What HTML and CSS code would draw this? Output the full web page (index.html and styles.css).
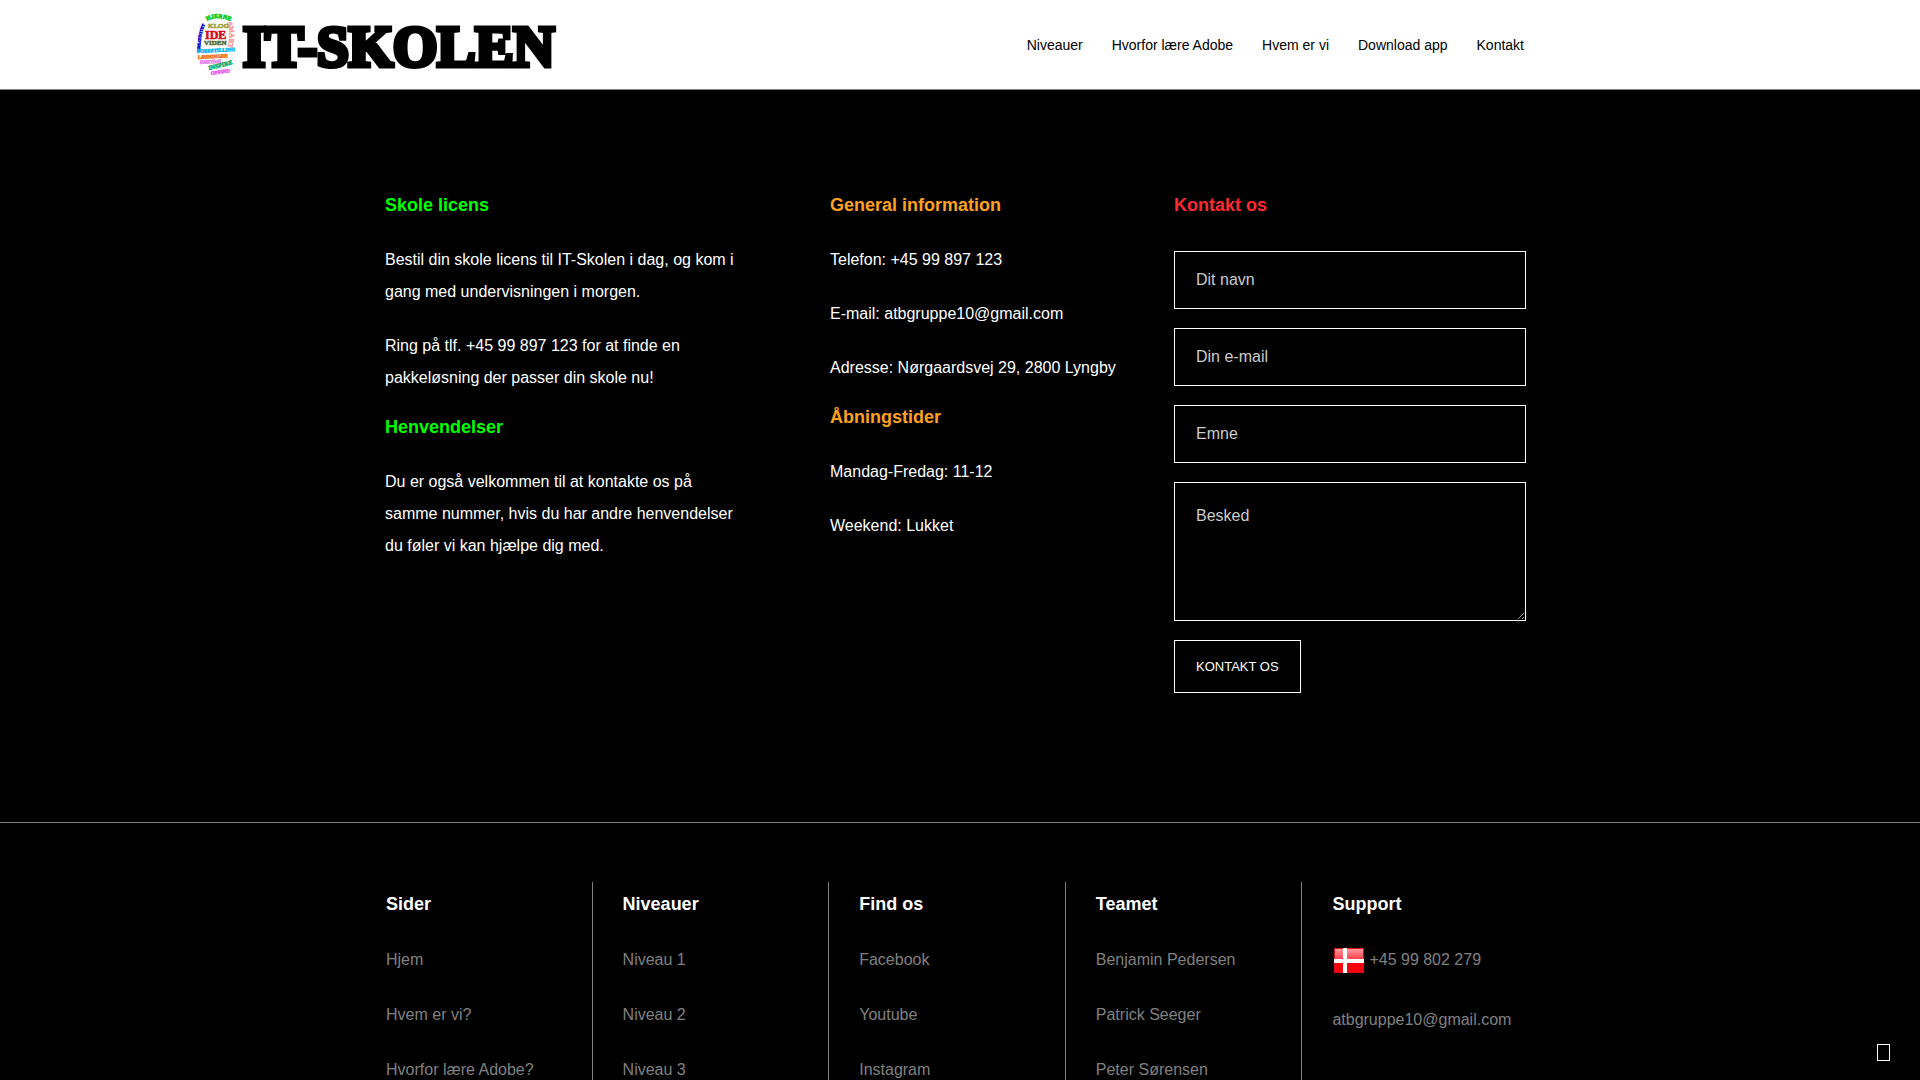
FILE: index.html
```html
<!DOCTYPE html>
<html lang="da">
<head>
<meta charset="utf-8">
<meta name="viewport" content="width=device-width, initial-scale=1">
<title>IT-Skolen</title>
<link rel="stylesheet" href="styles.css">
</head>
<body>
<header class="topbar">
  <a class="logo" href="#">
    <svg class="logo-head" width="42" height="64" viewBox="0 0 42 64" aria-hidden="true">
      <defs>
        <path id="top" d="M13 8 Q23 2 36 8"/>
        <path id="back" d="M33 10 Q38 20 33 36"/>
        <path id="front" d="M6 39 Q6 19 14 5"/>
      </defs>
      <g font-family="Liberation Serif, serif" font-weight="bold" stroke-width="0.6">
        <text font-size="6" fill="#0c2" stroke="#0c2"><textPath href="#top">HJERNE</textPath></text>
        <text font-size="4" fill="#11c" stroke="#11c"><textPath href="#front">KREATIVITET</textPath></text>
        <text font-size="7" fill="#f9a0a0" stroke="#f9a0a0"><textPath href="#back">SMART</textPath></text>
        <text x="14" y="15" font-size="7" fill="#a5a03a" stroke="#a5a03a">KLOG</text>
        <text x="11" y="26" font-size="12" fill="#d01018" stroke="#d01018">IDE</text>
        <text x="10" y="32" font-size="7" fill="#5c7040" stroke="#5c7040">VIDEN</text>
        <text x="3" y="40" font-size="5" fill="#1ab4f0" stroke="#1ab4f0" transform="rotate(-3 3 40)">FORESTILLING</text>
        <text x="4" y="46" font-size="5" fill="#f07818" stroke="#f07818" transform="rotate(-3 4 46)">LØSNINGER</text>
        <text x="6" y="51" font-size="5" fill="#e880f0" stroke="#e880f0" transform="rotate(-3 6 51)">FANTASI</text>
        <text x="15" y="57" font-size="6" fill="#10b070" stroke="#10b070" transform="rotate(-14 15 57)">INSPIRE</text>
        <text x="17" y="62" font-size="5" fill="#f060f0" stroke="#f060f0" transform="rotate(-8 17 62)">OPFIND</text>
      </g>
    </svg>
    <span class="logo-text">IT-SKOLEN</span>
  </a>
  <nav class="menu">
    <a href="#">Niveauer</a>
    <a href="#">Hvorfor lære Adobe</a>
    <a href="#">Hvem er vi</a>
    <a href="#">Download app</a>
    <a href="#">Kontakt</a>
  </nav>
</header>

<main class="contact">
  <section class="license">
    <h2>Skole licens</h2>
    <p>Bestil din skole licens til IT-Skolen i dag, og kom i gang med undervisningen i morgen.</p>
    <p>Ring på tlf. +45 99 897 123 for at finde en pakkeløsning der passer din skole nu!</p>
    <h2>Henvendelser</h2>
    <p>Du er også velkommen til at kontakte os på samme nummer, hvis du har andre henvendelser du føler vi kan hjælpe dig med.</p>
  </section>
  <section class="info">
    <h2>General information</h2>
    <p>Telefon: +45 99 897 123</p>
    <p>E-mail: atbgruppe10@gmail.com</p>
    <p>Adresse: Nørgaardsvej 29, 2800 Lyngby</p>
    <h2>Åbningstider</h2>
    <p>Mandag-Fredag: 11-12</p>
    <p>Weekend: Lukket</p>
  </section>
  <section class="write">
    <h2>Kontakt os</h2>
    <form class="form">
      <input type="text" placeholder="Dit navn" aria-label="Dit navn">
      <input type="email" placeholder="Din e-mail" aria-label="Din e-mail">
      <input type="text" placeholder="Emne" aria-label="Emne">
      <textarea placeholder="Besked" aria-label="Besked"></textarea>
      <button type="submit">KONTAKT OS</button>
    </form>
  </section>
</main>

<footer class="footer">
  <div class="footer-grid">
    <section>
      <h3>Sider</h3>
      <ul>
        <li><a href="#">Hjem</a></li>
        <li><a href="#">Hvem er vi?</a></li>
        <li><a href="#">Hvorfor lære Adobe?</a></li>
      </ul>
    </section>
    <section>
      <h3>Niveauer</h3>
      <ul>
        <li><a href="#">Niveau 1</a></li>
        <li><a href="#">Niveau 2</a></li>
        <li><a href="#">Niveau 3</a></li>
      </ul>
    </section>
    <section>
      <h3>Find os</h3>
      <ul>
        <li><a href="#">Facebook</a></li>
        <li><a href="#">Youtube</a></li>
        <li><a href="#">Instagram</a></li>
      </ul>
    </section>
    <section>
      <h3>Teamet</h3>
      <ul>
        <li><a href="#">Benjamin Pedersen</a></li>
        <li><a href="#">Patrick Seeger</a></li>
        <li><a href="#">Peter Sørensen</a></li>
      </ul>
    </section>
    <section>
      <h3>Support</h3>
      <ul class="support">
        <li class="phone">
          <svg width="30" height="25" viewBox="0 0 30 25" aria-hidden="true">
            <defs>
              <linearGradient id="gloss" x1="0" y1="0" x2="0" y2="1">
                <stop offset="0" stop-color="#ff9a9e"/>
                <stop offset="0.45" stop-color="#ff4048"/>
                <stop offset="0.55" stop-color="#f8000c"/>
                <stop offset="1" stop-color="#f8000c"/>
              </linearGradient>
            </defs>
            <rect width="30" height="25" fill="#d81018"/>
            <rect x="1" y="1" width="28" height="23" fill="url(#gloss)"/>
            <path d="M9 0h4v25h-4zM0 11h30v4H0z" fill="#fff"/>
          </svg>
          <a href="#">+45 99 802 279</a>
        </li>
        <li><a href="#">atbgruppe10@gmail.com</a></li>
      </ul>
    </section>
  </div>
</footer>

<button class="to-top" type="button" aria-label="Til toppen"><span class="to-top-mark"></span></button>
</body>
</html>
```
FILE: styles.css
```css
* {
  box-sizing: border-box;
}

html {
  background: #000;
  scrollbar-width: none;
}

body {
  margin: 0;
  min-height: 100vh;
  display: flex;
  flex-direction: column;
  background: #000;
  color: #fff;
  font: 16px/32px "Liberation Sans", Arial, sans-serif;
}

a {
  color: inherit;
  text-decoration: none;
}

h2,
h3,
p,
ul {
  margin: 0;
  padding: 0;
}

ul {
  list-style: none;
}

h2,
h3 {
  font-size: 18px;
  line-height: 22px;
  margin-bottom: 28px;
}

/* Header */

.topbar {
  display: flex;
  align-items: center;
  justify-content: space-between;
  min-height: 90px;
  padding: 0 calc(50% - 564px) 0 10%;
  background: #fff;
  border-bottom: 1px solid #808080;
  color: #000;
}

.logo {
  display: flex;
  align-items: center;
  gap: 7px;
}

.logo-head {
  margin-left: 2px;
}

.logo-text {
  padding-top: 4px;
  font: bold 57px/64px "Liberation Serif", "Times New Roman", serif;
  -webkit-text-stroke: 5px #000;
}

.menu {
  display: flex;
  gap: 29px;
  font-size: 14px;
}

/* Contact */

.contact {
  display: grid;
  grid-template-columns: 445fr 344fr 361fr;
  width: 100%;
  max-width: 1150px;
  margin: 0 auto;
  padding: 104px 0 129px;
}

.contact p {
  margin-bottom: 22px;
}

.license {
  padding-right: 90px;
}

.license h2 {
  color: #0f0;
}

.info h2 {
  color: #ffa020;
}

.write {
  padding-right: 9px;
}

.write h2 {
  color: #ff2a30;
  margin-bottom: 35px;
}

.form {
  display: flex;
  flex-direction: column;
  align-items: flex-start;
  gap: 19px;
}

.form input,
.form textarea,
.form button {
  display: block;
  margin: 0;
  border: 1px solid #fff;
  border-radius: 0;
  background: #000;
  color: #fff;
  font: inherit;
}

.form input,
.form textarea {
  width: 100%;
  padding: 0 21px;
}

.form input {
  height: 58px;
}

.form textarea {
  height: 139px;
  padding-top: 17px;
  resize: vertical;
}

.form ::placeholder {
  color: #ccc;
  opacity: 1;
}

.form button {
  height: 53px;
  padding: 0 21px;
  font-size: 13px;
}

/* Footer */

.footer {
  display: flex;
  flex: 1;
  justify-content: center;
  padding-top: 59px;
  border-top: 1px solid #808080;
  color: #808080;
}

.footer-grid {
  display: grid;
  grid-template-columns: repeat(5, 1fr);
  width: 100%;
  max-width: 1208px;
  padding-right: 25px;
}

.footer section {
  padding: 11px 0 0 30px;
  border-right: 1px solid #808080;
}

.footer section:last-child {
  border-right: 0;
}

.footer h3 {
  margin-bottom: 29px;
  color: #fff;
}

.footer ul {
  display: flex;
  flex-direction: column;
  gap: 23px;
}

.footer .support {
  gap: 28px;
}

.phone {
  display: flex;
  align-items: center;
  gap: 5px;
  padding-left: 2px;
}

/* Back to top */

.to-top {
  position: fixed;
  right: 20px;
  bottom: 9px;
  padding: 10px;
  border: 0;
  background: transparent;
}

.to-top-mark {
  display: block;
  width: 13px;
  height: 17px;
  border: 1px solid #fff;
}
```
